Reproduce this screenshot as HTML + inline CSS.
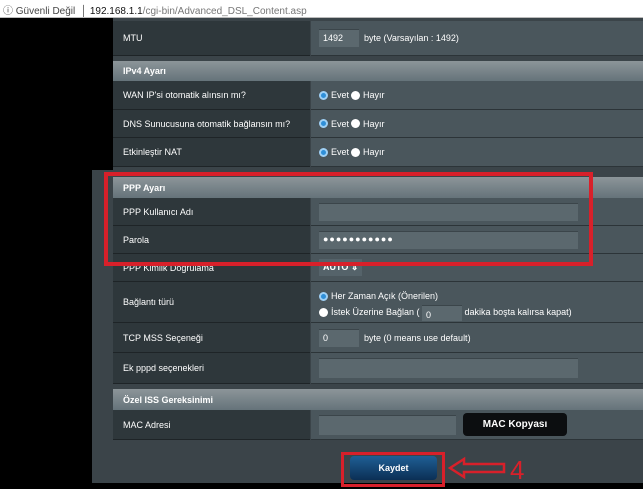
<!DOCTYPE html><html><head><style>
*{margin:0;padding:0;box-sizing:border-box}
body{width:643px;height:489px;background:#000;position:relative;overflow:hidden;font-family:"Liberation Sans",Arial,sans-serif;font-size:9px;color:#fff}
.a{position:absolute}
.lab{position:absolute;left:113px;width:197px;background:#2e373b;border-bottom:1px solid #1e2427;padding-left:10px;display:flex;align-items:center}
.val{position:absolute;left:311px;width:332px;background:#4a565c;border-bottom:1px solid #2c3438;padding-left:8px;display:flex;align-items:center}
.hd{position:absolute;left:113px;width:530px;background:linear-gradient(#8c9599,#65737a);font-weight:bold;padding-left:10px;display:flex;align-items:center}
.in{background:#5b686e;border-top:1px solid #3b454a;height:18px;display:inline-block}
.r{display:inline-block;width:9px;height:9px;border-radius:50%;background:#fff;margin-right:3px;vertical-align:middle}
.r.on{background:#2f8fd8;border:2px solid #9fd0f5}
</style></head><body>
<div class="a" style="left:0;top:0;width:643px;height:18px;background:#fff;border-bottom:1px solid #bbb;color:#444;font-size:10px;padding:2px 0 0 3px">ⓘ Güvenli Değil &nbsp;│ <span style="color:#111">192.168.1.1</span><span style="color:#777">/cgi-bin/Advanced_DSL_Content.asp</span></div>
<div class="a" style="left:92px;top:170px;width:551px;height:313px;background:#3b4449"></div>
<div class="a" style="left:113px;top:18px;width:530px;height:152px;background:#3b4449"></div>
<div class="lab" style="top:21px;height:35px">MTU</div>
<div class="val" style="top:21px;height:35px"><span class="in" style="width:40px;padding:3px 4px;color:#fff">1492</span>&nbsp; byte (Varsayılan : 1492)</div>
<div class="hd" style="top:61px;height:20px">IPv4 Ayarı</div>
<div class="lab" style="top:81px;height:29px">WAN IP'si otomatik alınsın mı?</div>
<div class="val" style="top:81px;height:29px"><span class="r on"></span>Evet <span class="r" style="margin-left:2px"></span>Hayır</div>
<div class="lab" style="top:110px;height:28px">DNS Sunucusuna otomatik bağlansın mı?</div>
<div class="val" style="top:110px;height:28px"><span class="r on"></span>Evet <span class="r" style="margin-left:2px"></span>Hayır</div>
<div class="lab" style="top:138px;height:29px">Etkinleştir NAT</div>
<div class="val" style="top:138px;height:29px"><span class="r on"></span>Evet <span class="r" style="margin-left:2px"></span>Hayır</div>
<div class="hd" style="top:177px;height:21px">PPP Ayarı</div>
<div class="lab" style="top:198px;height:28px">PPP Kullanıcı Adı</div>
<div class="val" style="top:198px;height:28px"><span class="in" style="width:259px"></span></div>
<div class="lab" style="top:226px;height:28px">Parola</div>
<div class="val" style="top:226px;height:28px"><span class="in" style="width:259px;padding:2px 4px;letter-spacing:1px">●●●●●●●●●●●</span></div>
<div class="lab" style="top:254px;height:28px">PPP Kimlik Doğrulama</div>
<div class="val" style="top:254px;height:28px"><span style="background:#55636a;padding:3px 4px;font-weight:bold">AUTO ⇕</span></div>
<div class="lab" style="top:282px;height:41px">Bağlantı türü</div>
<div class="val" style="top:282px;height:41px;display:block;padding-top:6px;line-height:16px"><span class="r on"></span>Her Zaman Açık (Önerilen)<br><span class="r"></span>İstek Üzerine Bağlan ( <span class="in" style="width:40px;height:16px;vertical-align:middle;padding:1px 4px">0</span> dakika boşta kalırsa kapat)</div>
<div class="lab" style="top:323px;height:30px">TCP MSS Seçeneği</div>
<div class="val" style="top:323px;height:30px"><span class="in" style="width:40px;padding:3px 4px">0</span>&nbsp; byte (0 means use default)</div>
<div class="lab" style="top:353px;height:31px">Ek pppd seçenekleri</div>
<div class="val" style="top:353px;height:31px"><span class="in" style="width:259px;height:20px"></span></div>
<div class="hd" style="top:389px;height:21px">Özel ISS Gereksinimi</div>
<div class="lab" style="top:410px;height:30px">MAC Adresi</div>
<div class="val" style="top:410px;height:30px"><span class="in" style="width:137px;height:20px"></span><span style="margin-left:7px;background:#0c0e10;border-radius:4px;width:104px;height:23px;display:inline-flex;align-items:center;justify-content:center;font-weight:bold;font-size:10px">MAC Kopyası</span></div>
<div class="a" style="left:341px;top:452px;width:104px;height:35px;border:3px solid #d8202a"></div>
<div class="a" style="left:350px;top:456px;width:87px;height:24px;border-radius:4px;background:linear-gradient(#1f5f95,#0b2f55);font-weight:bold;display:flex;align-items:center;justify-content:center">Kaydet</div>
<svg class="a" style="left:446px;top:455px" width="85" height="28"><path d="M4 13 L18 4 L18 9 L58 9 L58 17 L18 17 L18 22 Z" fill="none" stroke="#d8202a" stroke-width="2.5"/><text x="64" y="24" fill="#d8202a" font-size="26" font-family="Liberation Sans">4</text></svg>
<div class="a" style="left:104px;top:172px;width:489px;height:94px;border:4px solid #d8202a"></div>
</body></html>
